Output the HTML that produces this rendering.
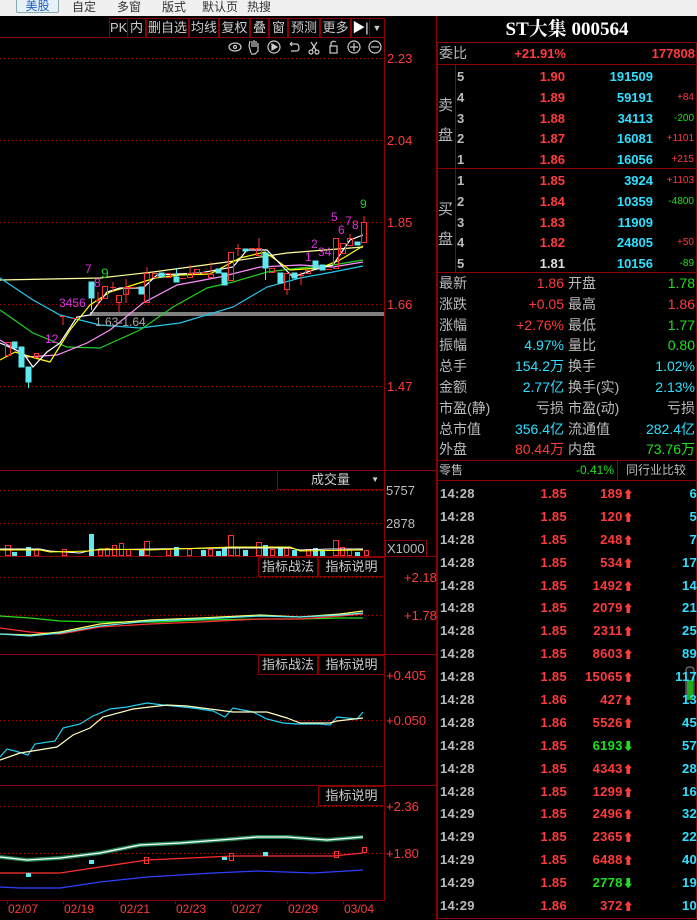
<!DOCTYPE html>
<html><head><meta charset="utf-8"><style>
*{margin:0;padding:0;box-sizing:border-box}
body{width:697px;height:920px;background:#000;overflow:hidden;position:relative;font-family:"Liberation Sans","Noto Sans CJK SC",sans-serif}
.top{position:absolute;left:0;top:0;width:697px;height:16px;background:#f0f0f0;font-size:12px;color:#333}
.top span{position:absolute;top:0;line-height:14px}
.btn{position:absolute;left:16px;top:-2px;width:43px;height:15px;border:1px solid #8aa;border-radius:2px;background:#e8f0f8;color:#1a5fc0;text-align:center;line-height:14px;font-size:12px}
.a{position:absolute;white-space:nowrap;font-size:13px;line-height:15px}
.r{text-align:right}
.tb{position:absolute;top:18px;height:20px;border:1px solid #800;color:#ccc;font-size:13px;line-height:18px;text-align:center}
.ib{position:absolute;border:1px solid #800;color:#ccc;font-size:13px;text-align:center;line-height:18px;height:20px;background:#000}
.w{color:#ddd}.rd{color:#ff3b3b}.cy{color:#2ee0ff}.gr{color:#1fe01f}.lb{color:#bbb}
.bd span.rd,.bd span.cy,.bd span.gr,.bd span.w,.bd span.lb{font-weight:bold}
.tk{font-weight:bold;letter-spacing:0.3px}
</style></head><body>
<div class="top"><div class="btn">美股</div><span style="left:72px">自定</span><span style="left:117px">多窗</span><span style="left:162px">版式</span><span style="left:202px">默认页</span><span style="left:247px">热搜</span></div>

<svg width="697" height="920" style="position:absolute;left:0;top:0" xmlns="http://www.w3.org/2000/svg">
<g stroke="#8b0000" stroke-width="1" fill="none">
<line x1="0" y1="37.5" x2="385" y2="37.5"/>
<line x1="384.5" y1="37" x2="384.5" y2="901"/>
<line x1="436.5" y1="16" x2="436.5" y2="920"/>
<line x1="0" y1="470.5" x2="436" y2="470.5"/>
<line x1="0" y1="556.5" x2="436" y2="556.5"/>
<line x1="0" y1="654.5" x2="436" y2="654.5"/>
<line x1="0" y1="785.5" x2="436" y2="785.5"/>
<line x1="0" y1="900.5" x2="385" y2="900.5"/>
</g>
<g stroke="#a00" stroke-dasharray="1,3" stroke-width="1">
<line x1="0" y1="58.5" x2="384" y2="58.5"/><line x1="0" y1="140.5" x2="384" y2="140.5"/><line x1="0" y1="222.5" x2="384" y2="222.5"/><line x1="0" y1="304.5" x2="384" y2="304.5"/><line x1="0" y1="386.5" x2="384" y2="386.5"/>
<line x1="0" y1="490.5" x2="384" y2="490.5"/><line x1="0" y1="523.5" x2="384" y2="523.5"/>
<line x1="0" y1="577.5" x2="384" y2="577.5"/><line x1="0" y1="615.5" x2="384" y2="615.5"/>
<line x1="0" y1="720.5" x2="384" y2="720.5"/><line x1="0" y1="766.5" x2="384" y2="766.5"/>
<line x1="0" y1="806.5" x2="384" y2="806.5"/><line x1="0" y1="853.5" x2="384" y2="853.5"/>
</g>
<g stroke="#8b0000"><line x1="7.5" y1="901" x2="7.5" y2="904"/><line x1="63.5" y1="901" x2="63.5" y2="904"/><line x1="119.5" y1="901" x2="119.5" y2="904"/><line x1="175.5" y1="901" x2="175.5" y2="904"/><line x1="231.5" y1="901" x2="231.5" y2="904"/><line x1="287.5" y1="901" x2="287.5" y2="904"/><line x1="343.5" y1="901" x2="343.5" y2="904"/></g>
<rect x="90" y="312" width="294" height="4" fill="#808080"/>
<g fill="none" stroke-width="1.2">
<polyline stroke="#ffffa0" points="0,280 100,278 153,272 227,262 287,253 363,247"/>
<polyline stroke="#22c8e8" points="0,278 33,300 60,315 100,325 140,328 180,323 233,307 267,287 300,278 333,272 363,266"/>
<polyline stroke="#20d020" points="0,310 33,333 67,347 100,348 140,330 173,307 207,288 233,282 267,272 300,268 333,265 363,260"/>
<polyline stroke="#ff90ff" points="0,340 27,357 57,355 87,343 110,330 143,303 177,285 220,277 260,267 300,265 333,267 363,262"/>
<polyline stroke="#ffff00" points="0,360 15,352 35,358 50,362 70,330 90,305 110,292 130,286 155,278 180,275 210,274 240,258 265,252 290,270 320,268 340,260 363,246"/>
<polyline stroke="#fff" points="0,343 23,353 33,367 47,352 60,343 77,317 90,315 107,292 120,288 143,288 157,275 200,273 233,267 247,250 267,250 283,267 293,277 313,270 333,265 350,240 363,235"/>
</g>
<g fill="none" stroke="#ff3030">
<rect x="5.5" y="342.5" width="5" height="13"/><rect x="34.5" y="353.5" width="4" height="4"/><line x1="63" y1="316" x2="63" y2="325"/><line x1="60" y1="316.5" x2="66" y2="316.5"/><line x1="72" y1="318.5" x2="78" y2="318.5"/>
<line x1="98" y1="292" x2="98" y2="306"/><line x1="95" y1="300.5" x2="101" y2="300.5"/><rect x="102.5" y="286.5" width="5" height="12"/><line x1="113" y1="282" x2="113" y2="292"/><line x1="110" y1="287.5" x2="116" y2="287.5"/>
<rect x="116.5" y="295.5" width="5" height="7"/><line x1="119" y1="302" x2="119" y2="312"/><rect x="123.5" y="287.5" width="5" height="7"/><line x1="126" y1="279" x2="126" y2="303"/><line x1="130" y1="287.5" x2="136" y2="287.5"/>
<rect x="144.5" y="273.5" width="5" height="29"/><line x1="147" y1="267" x2="147" y2="273"/><rect x="152.5" y="273.5" width="5" height="4"/><rect x="165.5" y="273.5" width="5" height="4"/><line x1="180" y1="278.5" x2="186" y2="278.5"/>
<rect x="187.5" y="273.5" width="5" height="4"/><line x1="190" y1="265" x2="190" y2="273"/><rect x="194.5" y="269.5" width="5" height="4"/><line x1="201" y1="272.5" x2="207" y2="272.5"/><rect x="208.5" y="274.5" width="5" height="3"/><line x1="211" y1="262" x2="211" y2="274"/>
<rect x="228.5" y="252.5" width="5" height="28"/><line x1="235" y1="248.5" x2="241" y2="248.5"/><line x1="238" y1="244" x2="238" y2="256"/><line x1="249" y1="248.5" x2="255" y2="248.5"/><rect x="256.5" y="248.5" width="5" height="7"/><line x1="259" y1="238" x2="259" y2="248"/>
<rect x="269.5" y="268.5" width="5" height="4"/><rect x="284.5" y="273.5" width="5" height="16"/><line x1="287" y1="289" x2="287" y2="295"/><line x1="298" y1="275.5" x2="304" y2="275.5"/><line x1="301" y1="272" x2="301" y2="285"/><rect x="305.5" y="270.5" width="5" height="3"/><line x1="326" y1="269.5" x2="332" y2="269.5"/>
<rect x="333.5" y="238.5" width="5" height="30"/><rect x="340.5" y="243.5" width="5" height="10"/><rect x="347.5" y="238.5" width="5" height="7"/><line x1="350" y1="234" x2="350" y2="238"/><rect x="361.5" y="222.5" width="5" height="20"/><line x1="364" y1="216" x2="364" y2="222"/>
</g>
<g fill="#5ee8f0" stroke="#5ee8f0">
<rect x="12" y="342" width="5" height="6"/><rect x="19" y="347" width="5" height="20"/><rect x="26" y="367" width="5" height="15"/><line x1="28.5" y1="382" x2="28.5" y2="388"/>
<rect x="89" y="282" width="5" height="16"/><line x1="91.5" y1="298" x2="91.5" y2="310"/><rect x="139" y="287" width="5" height="7"/><rect x="159" y="273" width="5" height="4"/><rect x="174" y="277" width="5" height="5"/><line x1="176.5" y1="268" x2="176.5" y2="277"/>
<rect x="216" y="269" width="5" height="4"/><rect x="222" y="273" width="5" height="12"/><rect x="243" y="249" width="5" height="2"/><rect x="263" y="253" width="5" height="15"/><line x1="265.5" y1="268" x2="265.5" y2="280"/>
<rect x="278" y="273" width="5" height="10"/><rect x="292" y="273" width="5" height="5"/><rect x="313" y="261" width="5" height="7"/><rect x="320" y="265" width="5" height="5"/><rect x="355" y="242" width="5" height="3"/>
</g>
<g fill="#5ee8f0"><rect x="12" y="552" width="5" height="4"/><rect x="26" y="547" width="5" height="9"/><rect x="89" y="534" width="5" height="22"/><rect x="139" y="550" width="5" height="6"/><rect x="174" y="547" width="5" height="9"/><rect x="201" y="550" width="5" height="6"/><rect x="216" y="551" width="5" height="5"/><rect x="222" y="548" width="5" height="8"/><rect x="243" y="550" width="5" height="6"/><rect x="263" y="545" width="5" height="11"/><rect x="278" y="548" width="5" height="8"/><rect x="292" y="550" width="5" height="6"/><rect x="313" y="548" width="5" height="8"/><rect x="320" y="550" width="5" height="6"/><rect x="355" y="552" width="5" height="4"/></g>
<g fill="none" stroke="#ff3030"><rect x="5.5" y="545.5" width="5" height="10"/><rect x="34.5" y="549.5" width="4" height="6"/><rect x="62.5" y="549.5" width="4" height="6"/><rect x="98.5" y="549.5" width="4" height="6"/><rect x="105.5" y="548.5" width="4" height="7"/><rect x="112.5" y="545.5" width="4" height="10"/><rect x="119.5" y="543.5" width="4" height="12"/><rect x="126.5" y="549.5" width="4" height="6"/><rect x="144.5" y="541.5" width="5" height="14"/><rect x="166.5" y="549.5" width="4" height="6"/><rect x="187.5" y="549.5" width="4" height="6"/><rect x="208.5" y="549.5" width="4" height="6"/><rect x="228.5" y="535.5" width="5" height="20"/><rect x="235.5" y="547.5" width="4" height="8"/><rect x="256.5" y="542.5" width="5" height="13"/><rect x="270.5" y="549.5" width="4" height="6"/><rect x="284.5" y="548.5" width="4" height="7"/><rect x="306.5" y="549.5" width="4" height="6"/><rect x="333.5" y="540.5" width="5" height="15"/><rect x="340.5" y="547.5" width="4" height="8"/><rect x="347.5" y="549.5" width="4" height="6"/><rect x="364.5" y="550.5" width="4" height="5"/></g>
<polyline fill="none" stroke="#fff" points="0,549 40,549 50,551 80,553 92,550 150,549 230,548 260,548 290,548 300,550 330,549 363,549"/>
<polyline fill="none" stroke="#ff0" points="0,550 40,550 50,552 90,551 100,549 150,550 230,547 290,547 300,551 363,550"/>
<g fill="none" stroke-width="1.2">
<polyline stroke="#20e020" points="0,616 30,618 60,621 100,622 160,622 200,620 260,619 300,619 340,618 363,618"/>
<polyline stroke="#ff3030" points="0,628 30,632 60,634 100,627 150,624 200,622 260,619 300,619 340,616 363,614"/>
<polyline stroke="#ffff60" points="0,634 30,635 60,632 100,624 150,620 200,618 260,615 300,617 340,614 363,611"/>
<polyline stroke="#5ee8f0" points="0,634 30,636 60,633 100,626 150,621 200,619 260,616 300,617 340,615 363,613"/>
</g>
<g fill="none" stroke-width="1.2">
<polyline stroke="#22d0f0" points="0,757 7,749 15,751 28,755 35,744 55,741 63,728 80,724 93,716 110,709 127,707 147,703 163,705 193,708 213,711 225,717 233,708 253,712 267,719 283,723 297,724 320,724 330,725 337,717 357,719 363,712"/>
<polyline stroke="#ffffc0" points="0,760 20,753 57,747 73,735 90,728 103,717 133,709 167,705 187,706 233,712 267,712 287,718 300,723 330,723 337,721 363,718"/>
</g>
<g fill="none">
<polyline stroke="#208050" stroke-width="4" points="0,857 27,860 60,858 100,853 140,845 180,843 233,839 257,837 287,837 327,840 363,837"/>
<polyline stroke="#fff" stroke-width="1.3" points="0,857 27,860 60,858 100,853 140,845 180,843 233,839 257,837 287,837 327,840 363,837"/>
<polyline stroke="#ff3030" stroke-width="1.3" points="0,873 60,873 100,867 147,860 233,856 333,856 363,853"/>
<polyline stroke="#3040ff" stroke-width="1.3" points="0,887 20,888 60,888 100,882 147,877 213,873 257,871 313,873 347,871 363,870"/>
</g>
<g fill="#5ee8f0"><rect x="89" y="860" width="5" height="4"/><rect x="26" y="873" width="5" height="4"/><rect x="222" y="857" width="5" height="3"/><rect x="263" y="852" width="5" height="4"/></g>
<g fill="none" stroke="#ff3030"><rect x="229.5" y="853.5" width="4" height="7"/><rect x="334.5" y="851.5" width="4" height="6"/><rect x="362.5" y="847.5" width="4" height="5"/><rect x="144.5" y="857.5" width="4" height="6"/></g>
<g stroke="#ccc" fill="none" stroke-width="1.2">
<ellipse cx="235" cy="47" rx="6" ry="4"/><circle cx="235" cy="47" r="1.5"/>
<path d="M251 53 L249 46 L250 41 M252 47 V41 M254 47 V40 M256 47 V41 M258 48 V43 L258 51 L255 54 H251"/>
<circle cx="274" cy="47" r="6"/><path d="M272 44 L277 47 L272 50 Z" fill="#ccc"/>
<path d="M290 44 H296 Q299 44 299 48 Q299 51 296 51 H291 M290 44 L292 42 M290 44 L292 46"/>
<circle cx="311" cy="52" r="2"/><circle cx="317" cy="52" r="2"/><path d="M312 50 L317 42 M316 50 L311 42"/>
<rect x="330" y="46" width="7" height="7"/><path d="M331 46 V43 Q333 40 336 42"/>
<circle cx="354" cy="47" r="6"/><path d="M350 47 H358 M354 43 V51"/>
<circle cx="375" cy="47" r="6"/><path d="M371 47 H379"/>
</g>
<g stroke="#8b0000" fill="none"><rect x="437.5" y="42.5" width="259" height="876"/><line x1="437" y1="64.5" x2="697" y2="64.5"/><line x1="437" y1="168.5" x2="697" y2="168.5"/><line x1="437" y1="272.5" x2="697" y2="272.5"/><line x1="455.5" y1="64" x2="455.5" y2="272"/><line x1="437" y1="460.5" x2="697" y2="460.5"/><line x1="437" y1="480.5" x2="697" y2="480.5"/><line x1="617.5" y1="460" x2="617.5" y2="480"/></g>
<rect x="686" y="667" width="8" height="30" rx="3" fill="#111" stroke="#888"/><rect x="687" y="680" width="6" height="20" fill="#2a2"/>
</svg>

<div class="tb" style="left:109px;width:19px">PK</div>
<div class="tb" style="left:127px;width:19px">内</div>
<div class="tb" style="left:146px;width:43px">删自选</div>
<div class="tb" style="left:189px;width:30px">均线</div>
<div class="tb" style="left:219px;width:31px">复权</div>
<div class="tb" style="left:250px;width:19px">叠</div>
<div class="tb" style="left:269px;width:19px">窗</div>
<div class="tb" style="left:288px;width:32px">预测</div>
<div class="tb" style="left:320px;width:31px">更多</div>
<div class="tb" style="left:351px;width:19px;color:#fff">&#9654;|</div>
<div class="tb" style="left:369px;width:16px;font-size:9px">&#9660;</div>

<div class="a rd" style="left:387px;top:51px">2.23</div>
<div class="a rd" style="left:387px;top:133px">2.04</div>
<div class="a rd" style="left:387px;top:215px">1.85</div>
<div class="a rd" style="left:387px;top:297px">1.66</div>
<div class="a rd" style="left:387px;top:379px">1.47</div>
<div class="a lb" style="left:386px;top:483px">5757</div>
<div class="a lb" style="left:386px;top:516px">2878</div>
<div class="a lb" style="left:385px;top:540px;border:1px solid #800;padding:0 1px">X1000</div>
<div class="a rd" style="left:404px;top:570px">+2.18</div>
<div class="a rd" style="left:404px;top:608px">+1.78</div>
<div class="a rd" style="left:386px;top:668px">+0.405</div>
<div class="a rd" style="left:386px;top:713px">+0.050</div>
<div class="a rd" style="left:386px;top:799px">+2.36</div>
<div class="a rd" style="left:386px;top:846px">+1.80</div>
<div class="ib" style="left:277px;top:470px;width:108px;text-align:left;padding-left:33px">成交量<span style="position:absolute;right:5px;font-size:8px">&#9660;</span></div>
<div class="ib" style="left:258px;top:557px;width:60px">指标战法</div>
<div class="ib" style="left:318px;top:557px;width:67px">指标说明</div>
<div class="ib" style="left:258px;top:655px;width:60px">指标战法</div>
<div class="ib" style="left:318px;top:655px;width:67px">指标说明</div>
<div class="ib" style="left:318px;top:786px;width:67px">指标说明</div>

<div class="a" style="left:85px;top:262px;color:#e030e0;font-size:12px">7</div>
<div class="a" style="left:101px;top:266px;color:#20d020;font-size:14px">9</div>
<div class="a" style="left:94px;top:276px;color:#e030e0;font-size:12px">8</div>
<div class="a" style="left:59px;top:296px;color:#e030e0;font-size:12px">3456</div>
<div class="a" style="left:95px;top:315px;color:#aaa;font-size:12px">1.63-1.64</div>
<div class="a" style="left:45px;top:332px;color:#e030e0;font-size:12px">12</div>
<div class="a" style="left:305px;top:250px;color:#e030e0;font-size:12px">1</div>
<div class="a" style="left:311px;top:237px;color:#e030e0;font-size:12px">2</div>
<div class="a" style="left:318px;top:245px;color:#e030e0;font-size:12px">34</div>
<div class="a" style="left:331px;top:210px;color:#e030e0;font-size:12px">5</div>
<div class="a" style="left:338px;top:223px;color:#e030e0;font-size:12px">6</div>
<div class="a" style="left:345px;top:214px;color:#e030e0;font-size:12px">7</div>
<div class="a" style="left:352px;top:218px;color:#e030e0;font-size:12px">8</div>
<div class="a" style="left:360px;top:197px;color:#20d020;font-size:12px">9</div>

<div class="a rd" style="left:8px;top:902px;font-size:12px">02/07</div>
<div class="a rd" style="left:64px;top:902px;font-size:12px">02/19</div>
<div class="a rd" style="left:120px;top:902px;font-size:12px">02/21</div>
<div class="a rd" style="left:176px;top:902px;font-size:12px">02/23</div>
<div class="a rd" style="left:232px;top:902px;font-size:12px">02/27</div>
<div class="a rd" style="left:288px;top:902px;font-size:12px">02/29</div>
<div class="a rd" style="left:344px;top:902px;font-size:12px">03/04</div>

<div class="a" style="left:437px;top:19px;width:260px;text-align:center;color:#fff;font:bold 19px 'Liberation Serif','Noto Serif CJK SC',serif;line-height:22px">ST大集 000564</div>
<div class="a lb" style="left:439px;top:46px;font-size:14px">委比</div>
<div class="a rd r" style="left:480px;top:46px;width:86px;font-weight:bold">+21.91%</div>
<div class="a rd r" style="left:600px;top:46px;width:95px;font-weight:bold">177808</div>
<div class="a lb" style="left:438px;top:91px;font-size:15px;line-height:30px">卖<br>盘</div>
<div class="a lb" style="left:438px;top:195px;font-size:15px;line-height:30px">买<br>盘</div>

<div class="bd" style="position:absolute;left:457px;top:67px;width:240px;font-size:13px;line-height:20.8px">
<div style="position:relative;height:20.8px"><span class="lb" style="position:absolute;left:0">5</span><span class="rd" style="position:absolute;right:132px">1.90</span><span class="cy" style="position:absolute;right:44px">191509</span></div>
<div style="position:relative;height:20.8px"><span class="lb" style="position:absolute;left:0">4</span><span class="rd" style="position:absolute;right:132px">1.89</span><span class="cy" style="position:absolute;right:44px">59191</span><span class="rd" style="position:absolute;right:3px;font-size:10px;font-weight:normal">+84</span></div>
<div style="position:relative;height:20.8px"><span class="lb" style="position:absolute;left:0">3</span><span class="rd" style="position:absolute;right:132px">1.88</span><span class="cy" style="position:absolute;right:44px">34113</span><span class="gr" style="position:absolute;right:3px;font-size:10px;font-weight:normal">-200</span></div>
<div style="position:relative;height:20.8px"><span class="lb" style="position:absolute;left:0">2</span><span class="rd" style="position:absolute;right:132px">1.87</span><span class="cy" style="position:absolute;right:44px">16081</span><span class="rd" style="position:absolute;right:3px;font-size:10px;font-weight:normal">+1101</span></div>
<div style="position:relative;height:20.8px"><span class="lb" style="position:absolute;left:0">1</span><span class="rd" style="position:absolute;right:132px">1.86</span><span class="cy" style="position:absolute;right:44px">16056</span><span class="rd" style="position:absolute;right:3px;font-size:10px;font-weight:normal">+215</span></div>
<div style="position:relative;height:20.8px"><span class="lb" style="position:absolute;left:0">1</span><span class="rd" style="position:absolute;right:132px">1.85</span><span class="cy" style="position:absolute;right:44px">3924</span><span class="rd" style="position:absolute;right:3px;font-size:10px;font-weight:normal">+1103</span></div>
<div style="position:relative;height:20.8px"><span class="lb" style="position:absolute;left:0">2</span><span class="rd" style="position:absolute;right:132px">1.84</span><span class="cy" style="position:absolute;right:44px">10359</span><span class="gr" style="position:absolute;right:3px;font-size:10px;font-weight:normal">-4800</span></div>
<div style="position:relative;height:20.8px"><span class="lb" style="position:absolute;left:0">3</span><span class="rd" style="position:absolute;right:132px">1.83</span><span class="cy" style="position:absolute;right:44px">11909</span></div>
<div style="position:relative;height:20.8px"><span class="lb" style="position:absolute;left:0">4</span><span class="rd" style="position:absolute;right:132px">1.82</span><span class="cy" style="position:absolute;right:44px">24805</span><span class="rd" style="position:absolute;right:3px;font-size:10px;font-weight:normal">+50</span></div>
<div style="position:relative;height:20.8px"><span class="lb" style="position:absolute;left:0">5</span><span class="w" style="position:absolute;right:132px">1.81</span><span class="cy" style="position:absolute;right:44px">10156</span><span class="gr" style="position:absolute;right:3px;font-size:10px;font-weight:normal">-89</span></div>
</div>

<div style="position:absolute;left:439px;top:273px;width:256px;font-size:14px;line-height:20.8px">
<div style="position:relative;height:20.8px"><span class="lb">最新</span><span class="rd" style="position:absolute;right:131px">1.86</span><span class="lb" style="position:absolute;left:129px">开盘</span><span class="gr" style="position:absolute;right:0">1.78</span></div>
<div style="position:relative;height:20.8px"><span class="lb">涨跌</span><span class="rd" style="position:absolute;right:131px">+0.05</span><span class="lb" style="position:absolute;left:129px">最高</span><span class="rd" style="position:absolute;right:0">1.86</span></div>
<div style="position:relative;height:20.8px"><span class="lb">涨幅</span><span class="rd" style="position:absolute;right:131px">+2.76%</span><span class="lb" style="position:absolute;left:129px">最低</span><span class="gr" style="position:absolute;right:0">1.77</span></div>
<div style="position:relative;height:20.8px"><span class="lb">振幅</span><span class="cy" style="position:absolute;right:131px">4.97%</span><span class="lb" style="position:absolute;left:129px">量比</span><span class="gr" style="position:absolute;right:0">0.80</span></div>
<div style="position:relative;height:20.8px"><span class="lb">总手</span><span class="cy" style="position:absolute;right:131px">154.2万</span><span class="lb" style="position:absolute;left:129px">换手</span><span class="cy" style="position:absolute;right:0">1.02%</span></div>
<div style="position:relative;height:20.8px"><span class="lb">金额</span><span class="cy" style="position:absolute;right:131px">2.77亿</span><span class="lb" style="position:absolute;left:129px">换手(实)</span><span class="cy" style="position:absolute;right:0">2.13%</span></div>
<div style="position:relative;height:20.8px"><span class="lb">市盈(静)</span><span class="lb" style="position:absolute;right:131px">亏损</span><span class="lb" style="position:absolute;left:129px">市盈(动)</span><span class="lb" style="position:absolute;right:0">亏损</span></div>
<div style="position:relative;height:20.8px"><span class="lb">总市值</span><span class="cy" style="position:absolute;right:131px">356.4亿</span><span class="lb" style="position:absolute;left:129px">流通值</span><span class="cy" style="position:absolute;right:0">282.4亿</span></div>
<div style="position:relative;height:20.8px"><span class="lb">外盘</span><span class="rd" style="position:absolute;right:131px">80.44万</span><span class="lb" style="position:absolute;left:129px">内盘</span><span class="gr" style="position:absolute;right:0">73.76万</span></div>
</div>
<div class="a lb" style="left:439px;top:463px;font-size:12px">零售</div>
<div class="a gr r" style="left:540px;top:463px;width:74px;font-size:12px">-0.41%</div>
<div class="a lb" style="left:626px;top:463px;font-size:12px">同行业比较</div>

<div class="tk" style="position:absolute;left:440px;top:483px;width:257px;font-size:13px;line-height:22.9px;overflow:hidden">
<div style="position:relative;height:22.9px"><span class="lb">14:28</span><span class="rd" style="position:absolute;right:130px">1.85</span><span class="rd" style="position:absolute;right:63px">189<span style="font-size:11px">&#11014;</span></span><span class="cy" style="position:absolute;right:0">6</span></div>
<div style="position:relative;height:22.9px"><span class="lb">14:28</span><span class="rd" style="position:absolute;right:130px">1.85</span><span class="rd" style="position:absolute;right:63px">120<span style="font-size:11px">&#11014;</span></span><span class="cy" style="position:absolute;right:0">5</span></div>
<div style="position:relative;height:22.9px"><span class="lb">14:28</span><span class="rd" style="position:absolute;right:130px">1.85</span><span class="rd" style="position:absolute;right:63px">248<span style="font-size:11px">&#11014;</span></span><span class="cy" style="position:absolute;right:0">7</span></div>
<div style="position:relative;height:22.9px"><span class="lb">14:28</span><span class="rd" style="position:absolute;right:130px">1.85</span><span class="rd" style="position:absolute;right:63px">534<span style="font-size:11px">&#11014;</span></span><span class="cy" style="position:absolute;right:0">17</span></div>
<div style="position:relative;height:22.9px"><span class="lb">14:28</span><span class="rd" style="position:absolute;right:130px">1.85</span><span class="rd" style="position:absolute;right:63px">1492<span style="font-size:11px">&#11014;</span></span><span class="cy" style="position:absolute;right:0">14</span></div>
<div style="position:relative;height:22.9px"><span class="lb">14:28</span><span class="rd" style="position:absolute;right:130px">1.85</span><span class="rd" style="position:absolute;right:63px">2079<span style="font-size:11px">&#11014;</span></span><span class="cy" style="position:absolute;right:0">21</span></div>
<div style="position:relative;height:22.9px"><span class="lb">14:28</span><span class="rd" style="position:absolute;right:130px">1.85</span><span class="rd" style="position:absolute;right:63px">2311<span style="font-size:11px">&#11014;</span></span><span class="cy" style="position:absolute;right:0">25</span></div>
<div style="position:relative;height:22.9px"><span class="lb">14:28</span><span class="rd" style="position:absolute;right:130px">1.85</span><span class="rd" style="position:absolute;right:63px">8603<span style="font-size:11px">&#11014;</span></span><span class="cy" style="position:absolute;right:0">89</span></div>
<div style="position:relative;height:22.9px"><span class="lb">14:28</span><span class="rd" style="position:absolute;right:130px">1.85</span><span class="rd" style="position:absolute;right:63px">15065<span style="font-size:11px">&#11014;</span></span><span class="cy" style="position:absolute;right:0">117</span></div>
<div style="position:relative;height:22.9px"><span class="lb">14:28</span><span class="rd" style="position:absolute;right:130px">1.86</span><span class="rd" style="position:absolute;right:63px">427<span style="font-size:11px">&#11014;</span></span><span class="cy" style="position:absolute;right:0">13</span></div>
<div style="position:relative;height:22.9px"><span class="lb">14:28</span><span class="rd" style="position:absolute;right:130px">1.86</span><span class="rd" style="position:absolute;right:63px">5526<span style="font-size:11px">&#11014;</span></span><span class="cy" style="position:absolute;right:0">45</span></div>
<div style="position:relative;height:22.9px"><span class="lb">14:28</span><span class="rd" style="position:absolute;right:130px">1.85</span><span class="gr" style="position:absolute;right:63px">6193<span style="font-size:11px">&#11015;</span></span><span class="cy" style="position:absolute;right:0">57</span></div>
<div style="position:relative;height:22.9px"><span class="lb">14:28</span><span class="rd" style="position:absolute;right:130px">1.85</span><span class="rd" style="position:absolute;right:63px">4343<span style="font-size:11px">&#11014;</span></span><span class="cy" style="position:absolute;right:0">28</span></div>
<div style="position:relative;height:22.9px"><span class="lb">14:28</span><span class="rd" style="position:absolute;right:130px">1.85</span><span class="rd" style="position:absolute;right:63px">1299<span style="font-size:11px">&#11014;</span></span><span class="cy" style="position:absolute;right:0">16</span></div>
<div style="position:relative;height:22.9px"><span class="lb">14:29</span><span class="rd" style="position:absolute;right:130px">1.85</span><span class="rd" style="position:absolute;right:63px">2496<span style="font-size:11px">&#11014;</span></span><span class="cy" style="position:absolute;right:0">32</span></div>
<div style="position:relative;height:22.9px"><span class="lb">14:29</span><span class="rd" style="position:absolute;right:130px">1.85</span><span class="rd" style="position:absolute;right:63px">2365<span style="font-size:11px">&#11014;</span></span><span class="cy" style="position:absolute;right:0">22</span></div>
<div style="position:relative;height:22.9px"><span class="lb">14:29</span><span class="rd" style="position:absolute;right:130px">1.85</span><span class="rd" style="position:absolute;right:63px">6488<span style="font-size:11px">&#11014;</span></span><span class="cy" style="position:absolute;right:0">40</span></div>
<div style="position:relative;height:22.9px"><span class="lb">14:29</span><span class="rd" style="position:absolute;right:130px">1.85</span><span class="gr" style="position:absolute;right:63px">2778<span style="font-size:11px">&#11015;</span></span><span class="cy" style="position:absolute;right:0">19</span></div>
<div style="position:relative;height:22.9px"><span class="lb">14:29</span><span class="rd" style="position:absolute;right:130px">1.86</span><span class="rd" style="position:absolute;right:63px">372<span style="font-size:11px">&#11014;</span></span><span class="cy" style="position:absolute;right:0">10</span></div>
</div>
</body></html>
